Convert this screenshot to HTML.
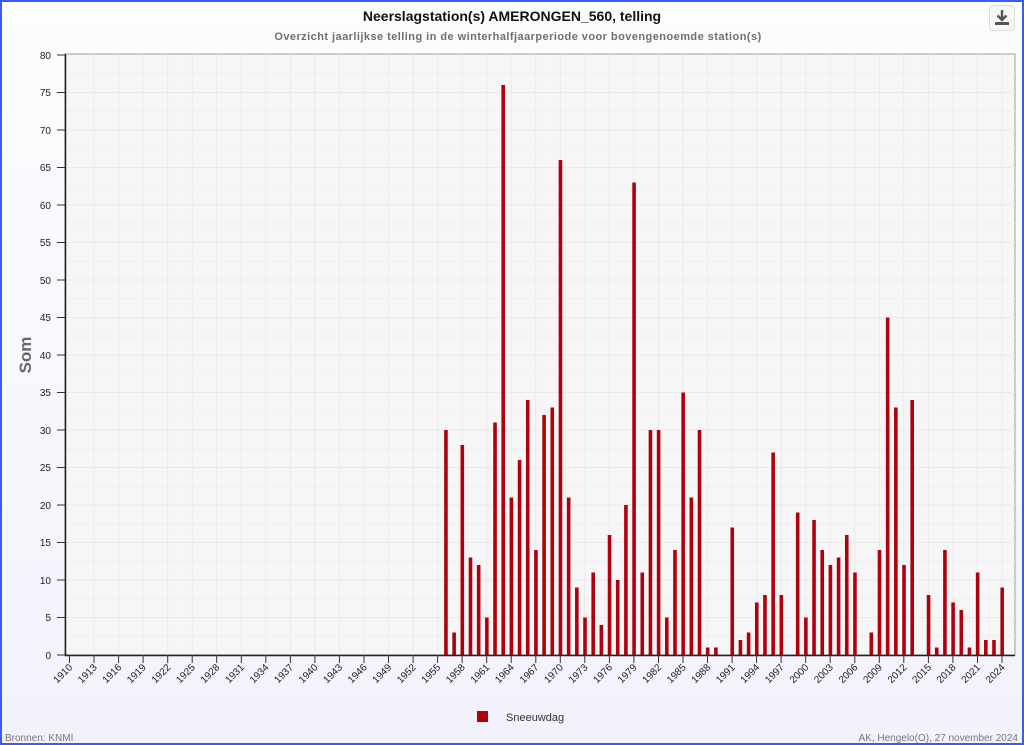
<!DOCTYPE html>
<html><head><meta charset="utf-8"><style>
html,body{margin:0;padding:0;}
body{width:1024px;height:745px;overflow:hidden;background:#f4f4fc;font-family:"Liberation Sans",sans-serif;}
.frame{position:absolute;left:0;top:0;width:1020px;height:741px;border:2px solid #3a5cf0;background:linear-gradient(#fdfdfe,#f2f2fc);}
</style></head><body>
<div class="frame"></div>
<svg width="1024" height="745" style="position:absolute;left:0;top:0" font-family="Liberation Sans, sans-serif">
<text x="512" y="21" text-anchor="middle" font-size="14" font-weight="bold" fill="#111">Neerslagstation(s) AMERONGEN_560, telling</text>
<text x="518" y="40" text-anchor="middle" font-size="11" letter-spacing="0.45" fill="#555" font-weight="bold" fill-opacity="0.85">Overzicht jaarlijkse telling in de winterhalfjaarperiode voor bovengenoemde station(s)</text>
<rect x="989.5" y="5.5" width="25" height="25" rx="3" fill="#f7f7f7" stroke="#ddd"/>
<path d="M1002 10v10M997.5 15.5l4.5 4.5 4.5-4.5" stroke="#555" stroke-width="2.4" fill="none"/>
<rect x="995" y="22" width="14" height="3" fill="#555"/>
<rect x="65" y="54" width="950" height="601" fill="#f6f6f6" stroke="#bbb" stroke-width="1.5"/>
<g stroke="#eaeaea" stroke-width="1">
<path d="M65 73.75H1015M65 111.25H1015M65 148.75H1015M65 186.25H1015M65 223.75H1015M65 261.25H1015M65 298.75H1015M65 336.25H1015M65 373.75H1015M65 411.25H1015M65 448.75H1015M65 486.25H1015M65 523.75H1015M65 561.25H1015M65 598.75H1015M65 636.25H1015" stroke="#efefef"/>
<path d="M65 92.5H1015M65 130H1015M65 167.5H1015M65 205H1015M65 242.5H1015M65 280H1015M65 317.5H1015M65 355H1015M65 392.5H1015M65 430H1015M65 467.5H1015M65 505H1015M65 542.5H1015M65 580H1015M65 617.5H1015"/>
<path d="M94 54V655M118.6 54V655M143.1 54V655M167.7 54V655M192.2 54V655M216.7 54V655M241.3 54V655M265.8 54V655M290.4 54V655M314.9 54V655M339.4 54V655M364 54V655M388.5 54V655M413.1 54V655M437.6 54V655M462.1 54V655M486.7 54V655M511.2 54V655M535.8 54V655M560.3 54V655M584.8 54V655M609.4 54V655M633.9 54V655M658.5 54V655M683 54V655M707.5 54V655M732.1 54V655M756.6 54V655M781.1 54V655M805.7 54V655M830.2 54V655M854.8 54V655M879.3 54V655M903.8 54V655M928.4 54V655M952.9 54V655M977.5 54V655M1002 54V655"/>
</g>
<g transform="translate(69.5,655) scale(8.18,-7.5)" fill="#b0000e">
<rect x="45.8" width="0.44" height="30"/><rect x="46.8" width="0.44" height="3"/><rect x="47.8" width="0.44" height="28"/><rect x="48.8" width="0.44" height="13"/><rect x="49.8" width="0.44" height="12"/><rect x="50.8" width="0.44" height="5"/><rect x="51.8" width="0.44" height="31"/><rect x="52.8" width="0.44" height="76"/><rect x="53.8" width="0.44" height="21"/><rect x="54.8" width="0.44" height="26"/><rect x="55.8" width="0.44" height="34"/><rect x="56.8" width="0.44" height="14"/><rect x="57.8" width="0.44" height="32"/><rect x="58.8" width="0.44" height="33"/><rect x="59.8" width="0.44" height="66"/><rect x="60.8" width="0.44" height="21"/><rect x="61.8" width="0.44" height="9"/><rect x="62.8" width="0.44" height="5"/><rect x="63.8" width="0.44" height="11"/><rect x="64.8" width="0.44" height="4"/><rect x="65.8" width="0.44" height="16"/><rect x="66.8" width="0.44" height="10"/><rect x="67.8" width="0.44" height="20"/><rect x="68.8" width="0.44" height="63"/><rect x="69.8" width="0.44" height="11"/><rect x="70.8" width="0.44" height="30"/><rect x="71.8" width="0.44" height="30"/><rect x="72.8" width="0.44" height="5"/><rect x="73.8" width="0.44" height="14"/><rect x="74.8" width="0.44" height="35"/><rect x="75.8" width="0.44" height="21"/><rect x="76.8" width="0.44" height="30"/><rect x="77.8" width="0.44" height="1"/><rect x="78.8" width="0.44" height="1"/><rect x="80.8" width="0.44" height="17"/><rect x="81.8" width="0.44" height="2"/><rect x="82.8" width="0.44" height="3"/><rect x="83.8" width="0.44" height="7"/><rect x="84.8" width="0.44" height="8"/><rect x="85.8" width="0.44" height="27"/><rect x="86.8" width="0.44" height="8"/><rect x="88.8" width="0.44" height="19"/><rect x="89.8" width="0.44" height="5"/><rect x="90.8" width="0.44" height="18"/><rect x="91.8" width="0.44" height="14"/><rect x="92.8" width="0.44" height="12"/><rect x="93.8" width="0.44" height="13"/><rect x="94.8" width="0.44" height="16"/><rect x="95.8" width="0.44" height="11"/><rect x="97.8" width="0.44" height="3"/><rect x="98.8" width="0.44" height="14"/><rect x="99.8" width="0.44" height="45"/><rect x="100.8" width="0.44" height="33"/><rect x="101.8" width="0.44" height="12"/><rect x="102.8" width="0.44" height="34"/><rect x="104.8" width="0.44" height="8"/><rect x="105.8" width="0.44" height="1"/><rect x="106.8" width="0.44" height="14"/><rect x="107.8" width="0.44" height="7"/><rect x="108.8" width="0.44" height="6"/><rect x="109.8" width="0.44" height="1"/><rect x="110.8" width="0.44" height="11"/><rect x="111.8" width="0.44" height="2"/><rect x="112.8" width="0.44" height="2"/><rect x="113.8" width="0.44" height="9"/>
</g>
<path d="M65.5 54V655.5H1015" stroke="#222" stroke-width="1.5" fill="none"/>
<g stroke="#333" stroke-width="1">
<path d="M57 55H65M57 92.5H65M57 130H65M57 167.5H65M57 205H65M57 242.5H65M57 280H65M57 317.5H65M57 355H65M57 392.5H65M57 430H65M57 467.5H65M57 505H65M57 542.5H65M57 580H65M57 617.5H65M57 655H65"/>
<path d="M69.5 655V663M94 655V663M118.6 655V663M143.1 655V663M167.7 655V663M192.2 655V663M216.7 655V663M241.3 655V663M265.8 655V663M290.4 655V663M314.9 655V663M339.4 655V663M364 655V663M388.5 655V663M413.1 655V663M437.6 655V663M462.1 655V663M486.7 655V663M511.2 655V663M535.8 655V663M560.3 655V663M584.8 655V663M609.4 655V663M633.9 655V663M658.5 655V663M683 655V663M707.5 655V663M732.1 655V663M756.6 655V663M781.1 655V663M805.7 655V663M830.2 655V663M854.8 655V663M879.3 655V663M903.8 655V663M928.4 655V663M952.9 655V663M977.5 655V663M1002 655V663"/>
</g>
<g font-size="10" fill="#222" text-anchor="end">
<text x="51" y="59">80</text><text x="51" y="96">75</text><text x="51" y="134">70</text><text x="51" y="171">65</text><text x="51" y="209">60</text><text x="51" y="246">55</text><text x="51" y="284">50</text><text x="51" y="321">45</text><text x="51" y="359">40</text><text x="51" y="396">35</text><text x="51" y="434">30</text><text x="51" y="471">25</text><text x="51" y="509">20</text><text x="51" y="546">15</text><text x="51" y="584">10</text><text x="51" y="621">5</text><text x="51" y="659">0</text>
</g>
<text transform="translate(31,355) rotate(-90)" text-anchor="middle" font-size="17" font-weight="bold" fill="#666">Som</text>
<g font-size="10" fill="#222" text-anchor="end">
<text transform="translate(73,668) rotate(-45)">1910</text><text transform="translate(97.5,668) rotate(-45)">1913</text><text transform="translate(122.1,668) rotate(-45)">1916</text><text transform="translate(146.6,668) rotate(-45)">1919</text><text transform="translate(171.2,668) rotate(-45)">1922</text><text transform="translate(195.7,668) rotate(-45)">1925</text><text transform="translate(220.2,668) rotate(-45)">1928</text><text transform="translate(244.8,668) rotate(-45)">1931</text><text transform="translate(269.3,668) rotate(-45)">1934</text><text transform="translate(293.9,668) rotate(-45)">1937</text><text transform="translate(318.4,668) rotate(-45)">1940</text><text transform="translate(342.9,668) rotate(-45)">1943</text><text transform="translate(367.5,668) rotate(-45)">1946</text><text transform="translate(392,668) rotate(-45)">1949</text><text transform="translate(416.6,668) rotate(-45)">1952</text><text transform="translate(441.1,668) rotate(-45)">1955</text><text transform="translate(465.6,668) rotate(-45)">1958</text><text transform="translate(490.2,668) rotate(-45)">1961</text><text transform="translate(514.7,668) rotate(-45)">1964</text><text transform="translate(539.3,668) rotate(-45)">1967</text><text transform="translate(563.8,668) rotate(-45)">1970</text><text transform="translate(588.3,668) rotate(-45)">1973</text><text transform="translate(612.9,668) rotate(-45)">1976</text><text transform="translate(637.4,668) rotate(-45)">1979</text><text transform="translate(662,668) rotate(-45)">1982</text><text transform="translate(686.5,668) rotate(-45)">1985</text><text transform="translate(711,668) rotate(-45)">1988</text><text transform="translate(735.6,668) rotate(-45)">1991</text><text transform="translate(760.1,668) rotate(-45)">1994</text><text transform="translate(784.6,668) rotate(-45)">1997</text><text transform="translate(809.2,668) rotate(-45)">2000</text><text transform="translate(833.7,668) rotate(-45)">2003</text><text transform="translate(858.3,668) rotate(-45)">2006</text><text transform="translate(882.8,668) rotate(-45)">2009</text><text transform="translate(907.3,668) rotate(-45)">2012</text><text transform="translate(931.9,668) rotate(-45)">2015</text><text transform="translate(956.4,668) rotate(-45)">2018</text><text transform="translate(981,668) rotate(-45)">2021</text><text transform="translate(1005.5,668) rotate(-45)">2024</text>
</g>
<rect x="477" y="711" width="11" height="11" fill="#b0000e"/>
<text x="506" y="721" font-size="11" fill="#333">Sneeuwdag</text>
<text x="5" y="741" font-size="10" fill="#777">Bronnen: KNMI</text>
<text x="1018" y="741" font-size="10" fill="#777" text-anchor="end">AK, Hengelo(O), 27 november 2024</text>
</svg>
</body></html>
